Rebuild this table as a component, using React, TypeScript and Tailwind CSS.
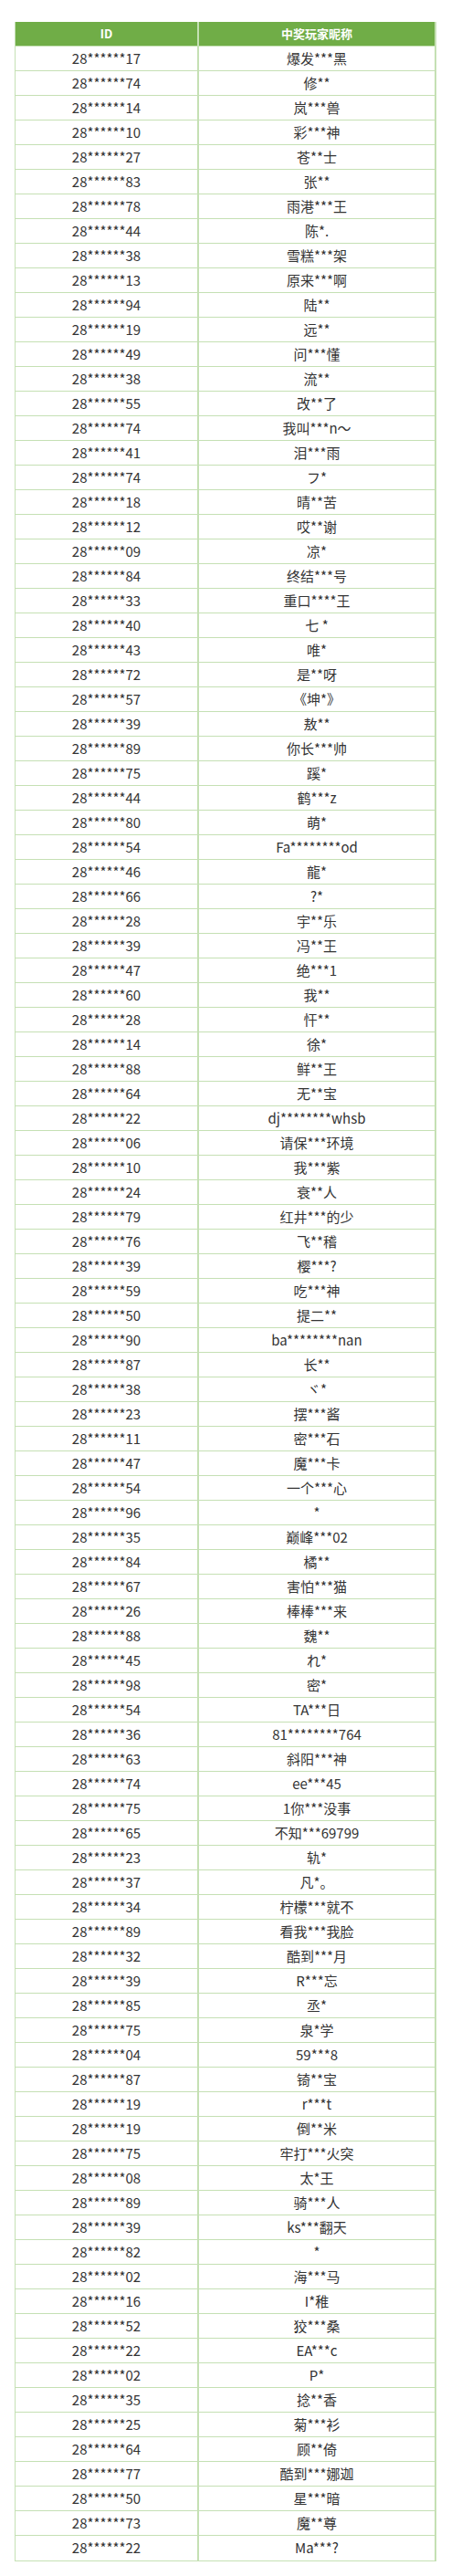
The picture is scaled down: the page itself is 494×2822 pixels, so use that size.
const winners: [string, string][] = [
  ['17', '爆发***黑'],
  ['74', '修**'],
  ['14', '岚***兽'],
  ['10', '彩***神'],
  ['27', '苍**士'],
  ['83', '张**'],
  ['78', '雨港***王'],
  ['44', '陈*.'],
  ['38', '雪糕***架'],
  ['13', '原来***啊'],
  ['94', '陆**'],
  ['19', '远**'],
  ['49', '问***懂'],
  ['38', '流**'],
  ['55', '改**了'],
  ['74', '我叫***n～'],
  ['41', '泪***雨'],
  ['74', 'フ*'],
  ['18', '晴**苦'],
  ['12', '哎**谢'],
  ['09', '凉*'],
  ['84', '终结***号'],
  ['33', '重口****王'],
  ['40', '七 *'],
  ['43', '唯*'],
  ['72', '是**呀'],
  ['57', '《坤*》'],
  ['39', '敖**'],
  ['89', '你长***帅'],
  ['75', '蹊*'],
  ['44', '鹤***z'],
  ['80', '萌*'],
  ['54', 'Fa********od'],
  ['46', '龍*'],
  ['66', '?*'],
  ['28', '宇**乐'],
  ['39', '冯**王'],
  ['47', '绝***1'],
  ['60', '我**'],
  ['28', '忓**'],
  ['14', '徐*'],
  ['88', '鲜**王'],
  ['64', '无**宝'],
  ['22', 'dj********whsb'],
  ['06', '请保***环境'],
  ['10', '我***紫'],
  ['24', '衰**人'],
  ['79', '红井***的少'],
  ['76', '飞**稽'],
  ['39', '樱***?'],
  ['59', '吃***神'],
  ['50', '提二**'],
  ['90', 'ba********nan'],
  ['87', '长**'],
  ['38', 'ヾ*'],
  ['23', '摆***酱'],
  ['11', '密***石'],
  ['47', '魔***卡'],
  ['54', '一个***心'],
  ['96', '*'],
  ['35', '巅峰***02'],
  ['84', '橘**'],
  ['67', '害怕***猫'],
  ['26', '棒棒***来'],
  ['88', '魏**'],
  ['45', 'れ*'],
  ['98', '密*'],
  ['54', 'TA***日'],
  ['36', '81********764'],
  ['63', '斜阳***神'],
  ['74', 'ee***45'],
  ['75', '1你***没事'],
  ['65', '不知***69799'],
  ['23', '轨*'],
  ['37', '凡*。'],
  ['34', '柠檬***就不'],
  ['89', '看我***我脸'],
  ['32', '酷到***月'],
  ['39', 'R***忘'],
  ['85', '丞*'],
  ['75', '泉*学'],
  ['04', '59***8'],
  ['87', '锜**宝'],
  ['19', 'r***t'],
  ['19', '倒**米'],
  ['75', '牢打***火突'],
  ['08', '太*王'],
  ['89', '骑***人'],
  ['39', 'ks***翻天'],
  ['82', '*'],
  ['02', '海***马'],
  ['16', 'I*稚'],
  ['52', '狡***桑'],
  ['22', 'EA***c'],
  ['02', 'P*'],
  ['35', '捻**香'],
  ['25', '菊***衫'],
  ['64', '顾**倚'],
  ['77', '酷到***娜迦'],
  ['50', '星***暗'],
  ['73', '魔**尊'],
  ['22', 'Ma***?'],
];

export default function App() {
  return (
    <div className="min-h-screen bg-white pt-6 pl-4 font-['Noto_Sans_CJK_SC','Noto_Sans',sans-serif]">
      <div className="w-[462px] border-l border-r-2 border-b border-[#c5e0b4]">
        {/* header */}
        <div className="flex h-[27px] bg-[#70ad47] border-b border-[#c5e0b4] text-[13px] font-bold text-white">
          <div className="w-[201px] flex items-center justify-center border-r-2 border-[#c5e0b4]">ID</div>
          <div className="flex-1 flex items-center justify-center">中奖玩家昵称</div>
        </div>

        {winners.map(([tail, name], i) => (
          <div
            key={i}
            className="flex h-[27px] border-b border-[#c5e0b4] last:border-b-0 text-[15px] text-[#333]"
          >
            <div className="w-[201px] flex items-center justify-center border-r-2 border-[#c5e0b4]">
              28******{tail}
            </div>
            <div className="flex-1 flex items-center justify-center">{name}</div>
          </div>
        ))}
      </div>
    </div>
  );
}
